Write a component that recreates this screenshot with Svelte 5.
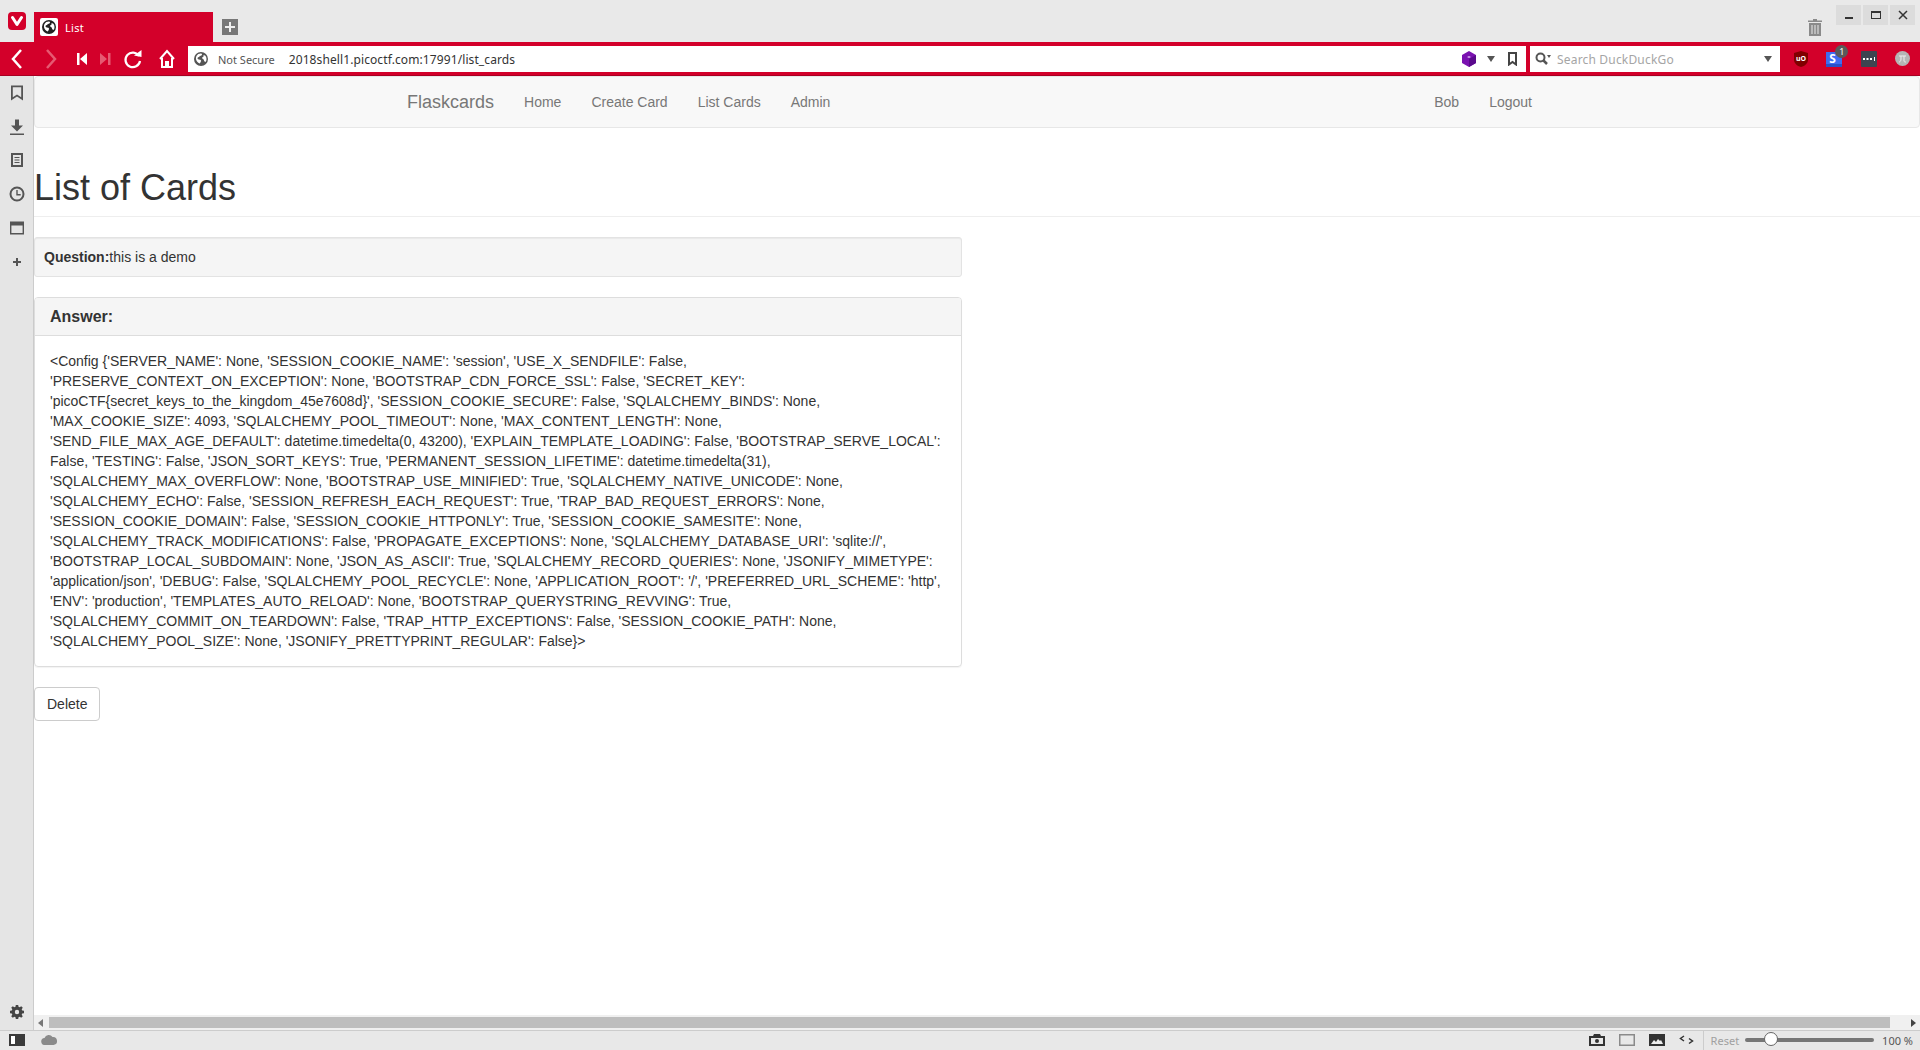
<script lang="ts">
  const sideIcons = [
    "M3 1.500h12v15l-6-4-6 4zM4.800 3.200v10l4.200-2.800 4.200 2.800v-10z",
    "M7 1.500h4v6h4l-6 6-6-6h4zM2 15.500h14v1.600H2z",
    "M3 2h12v14H3zM5 4v10h8V4zM6.500 6h5v1h-5zM6.500 8.500h5v1h-5zM6.500 11h5v1h-5z",
    "M9 1.500a7.500 7.500 0 1 0 0 15 7.500 7.500 0 0 0 0-15zM9 3.500a5.500 5.500 0 1 1 0 11 5.500 5.500 0 0 1 0-11zM8.300 5h1.400v4h3v1.400H8.300z",
    "M2 2.500h14v13H2zM3.400 6.500v7.600h11.200V6.500z",
    "M8 5h2v3h3v2h-3v3H8v-3H5V8h3z",
  ];

  const configText = `<Config {'SERVER_NAME': None, 'SESSION_COOKIE_NAME': 'session', 'USE_X_SENDFILE': False, 'PRESERVE_CONTEXT_ON_EXCEPTION': None, 'BOOTSTRAP_CDN_FORCE_SSL': False, 'SECRET_KEY': 'picoCTF{secret_keys_to_the_kingdom_45e7608d}', 'SESSION_COOKIE_SECURE': False, 'SQLALCHEMY_BINDS': None, 'MAX_COOKIE_SIZE': 4093, 'SQLALCHEMY_POOL_TIMEOUT': None, 'MAX_CONTENT_LENGTH': None, 'SEND_FILE_MAX_AGE_DEFAULT': datetime.timedelta(0, 43200), 'EXPLAIN_TEMPLATE_LOADING': False, 'BOOTSTRAP_SERVE_LOCAL': False, 'TESTING': False, 'JSON_SORT_KEYS': True, 'PERMANENT_SESSION_LIFETIME': datetime.timedelta(31), 'SQLALCHEMY_MAX_OVERFLOW': None, 'BOOTSTRAP_USE_MINIFIED': True, 'SQLALCHEMY_NATIVE_UNICODE': None, 'SQLALCHEMY_ECHO': False, 'SESSION_REFRESH_EACH_REQUEST': True, 'TRAP_BAD_REQUEST_ERRORS': None, 'SESSION_COOKIE_DOMAIN': False, 'SESSION_COOKIE_HTTPONLY': True, 'SESSION_COOKIE_SAMESITE': None, 'SQLALCHEMY_TRACK_MODIFICATIONS': False, 'PROPAGATE_EXCEPTIONS': None, 'SQLALCHEMY_DATABASE_URI': 'sqlite://', 'BOOTSTRAP_LOCAL_SUBDOMAIN': None, 'JSON_AS_ASCII': True, 'SQLALCHEMY_RECORD_QUERIES': None, 'JSONIFY_MIMETYPE': 'application/json', 'DEBUG': False, 'SQLALCHEMY_POOL_RECYCLE': None, 'APPLICATION_ROOT': '/', 'PREFERRED_URL_SCHEME': 'http', 'ENV': 'production', 'TEMPLATES_AUTO_RELOAD': None, 'BOOTSTRAP_QUERYSTRING_REVVING': True, 'SQLALCHEMY_COMMIT_ON_TEARDOWN': False, 'TRAP_HTTP_EXCEPTIONS': False, 'SESSION_COOKIE_PATH': None, 'SQLALCHEMY_POOL_SIZE': None, 'JSONIFY_PRETTYPRINT_REGULAR': False}>`;

  const globe = "M8 0a8 8 0 1 0 0 16A8 8 0 0 0 8 0zM5.200 2.200c1-.5 2.300-.7 3.300-.5l.8 1.300-1.300 1.200-1.600.3-.4 1.300-1.500.3-.6 1.300 1.400 1.300 2 .1.900 1.200-.6 1.500-.9 1.600c-2.600-.8-4.500-3.300-4.500-6.100 0-1.800 1.300-3.900 3-5.100zM11 3.500l2 .9c.8 1.100 1.300 2.200 1.300 3.600 0 1.300-.4 2.500-1.100 3.500l-1.500-.8-.6-2-1.500-1-.2-1.700 1.400-.6z";
</script>

<div class="window">
  <header class="tabstrip">
    <div class="logo">
      <svg width="18" height="18" viewBox="0 0 18 18"><rect width="18" height="18" rx="4" fill="#d3002a" /><path d="M4.500 5.500 9 12.500l4.500-7" fill="none" stroke="#fff" stroke-width="3" stroke-linecap="round" stroke-linejoin="round" /></svg>
    </div>
    <div class="tab">
      <span class="favicon">
        <svg width="14" height="14" viewBox="0 0 16 16"><path d={globe} fill="#222" fill-rule="evenodd" /></svg>
      </span>
      <span class="tab-title">List</span>
    </div>
    <div class="newtab">
      <svg width="16" height="16" viewBox="0 0 16 16"><rect width="16" height="16" fill="#777" /><path d="M7 3h2v4h4v2H9v4H7V9H3V7h4z" fill="#eee" /></svg>
    </div>
    <div class="grow"></div>
    <svg class="trash" width="14" height="17" viewBox="0 0 14 17"><path d="M5 0h4v1.500h5V3H0V1.500h5zM1 4h12v13H1zM3.500 6v9h1V6zM6.500 6v9h1V6zM9.500 6v9h1V6z" fill="#8a8a8a" fill-rule="evenodd" /></svg>
    <div class="winbtns">
      <span class="winbtn"><svg width="12" height="12" viewBox="0 0 12 12"><rect x="2" y="8" width="8" height="2" fill="#333" /></svg></span>
      <span class="winbtn"><svg width="12" height="12" viewBox="0 0 12 12"><path d="M1 2h10v8H1zM2 4v5h8V4z" fill="#333" fill-rule="evenodd" /></svg></span>
      <span class="winbtn"><svg width="12" height="12" viewBox="0 0 12 12"><path d="M2 2l8 8M10 2l-8 8" stroke="#333" stroke-width="1.500" /></svg></span>
    </div>
  </header>

  <nav class="toolbar">
    <div class="navbtns">
      <svg width="34" height="26" viewBox="0 0 34 26"><path d="M21 4l-8 9 8 9" fill="none" stroke="#fff" stroke-width="2.500" /></svg>
      <svg width="34" height="26" viewBox="0 0 34 26"><path d="M13 4l8 9-8 9" fill="none" stroke="#e65a72" stroke-width="2.500" /></svg>
      <svg class="skip" width="24" height="26" viewBox="0 0 24 26"><path d="M7 7h2.500v12H7zM17 7v12l-7-6z" fill="#fff" /></svg>
      <svg class="skip-next" width="24" height="26" viewBox="0 0 24 26"><path d="M6 7l7 6-7 6zM14 7h2.500v12H14z" fill="#e65a72" /></svg>
      <svg width="34" height="26" viewBox="0 0 34 26"><path d="M23 10a7.300 7.300 0 1 0 1 5" fill="none" stroke="#fff" stroke-width="2.200" /><path d="M18 9.500l7.500 1.500V4z" fill="#fff" /></svg>
      <svg width="34" height="26" viewBox="0 0 34 26"><path d="M10 13l7-8 7 8M12 12v9h4v-5h2v5h4v-9" fill="none" stroke="#fff" stroke-width="2" /></svg>
    </div>

    <div class="addressbar">
      <svg width="14" height="14" viewBox="0 0 16 16"><path d={globe} fill="#555" fill-rule="evenodd" /></svg>
      <span class="notsecure">Not Secure</span>
      <span class="url">2018shell1.picoctf.com:17991/list_cards</span>
      <div class="grow"></div>
      <svg width="16" height="16" viewBox="0 0 16 16"><path d="M8 0l7 4v8l-7 4-7-4V4z" fill="#7a12b0" /><path d="M8 8l7-4v8l-7 4z" fill="#5a0a8c" /><path d="M6 6l2-1 2 1-2 1z" fill="#d9b3f0" /></svg>
      <svg class="caret" width="8" height="6" viewBox="0 0 8 6"><path d="M0 0h8L4 6z" fill="#555" /></svg>
      <svg class="mark" width="9" height="14" viewBox="0 0 9 14"><path d="M1 1h7v11.500L4.500 10 1 12.500z" fill="none" stroke="#444" stroke-width="2" /></svg>
    </div>

    <div class="searchbar">
      <svg width="16" height="14" viewBox="0 0 16 14"><circle cx="5.500" cy="5.500" r="4" fill="none" stroke="#555" stroke-width="2" /><path d="M8.500 8.500 12 12" stroke="#555" stroke-width="2.500" /><path d="M12 3h4l-2 3z" fill="#555" /></svg>
      <span class="search-placeholder">Search DuckDuckGo</span>
      <div class="grow"></div>
      <svg width="8" height="6" viewBox="0 0 8 6"><path d="M0 0h8L4 6z" fill="#555" /></svg>
    </div>

    <div class="extensions">
      <svg width="14" height="16" viewBox="0 0 14 16"><path d="M7 0l7 2v7c0 3-3 6-7 7-4-1-7-4-7-7V2z" fill="#800000" /><text x="7" y="9.500" class="ublock">uO</text></svg>
      <span class="ext-s">
        <svg width="16" height="16" viewBox="0 0 16 16"><rect width="16" height="15" y="1" fill="#2a50c8" /><rect width="16" height="12" y="1" fill="#3f6cf0" /></svg>
        <span class="ext-s-letter">S</span>
        <span class="badge">1</span>
      </span>
      <svg width="16" height="16" viewBox="0 0 16 16"><rect width="16" height="16" rx="1" fill="#3d4450" /><path d="M2 7h2v2H2zM5.500 7h2v2h-2zM9 7h2v2H9zM13 6h1v4h-1z" fill="#fff" /></svg>
      <svg width="15" height="15" viewBox="0 0 15 15"><circle cx="7.500" cy="7.500" r="7.500" fill="#b5b5b5" /><path d="M4 5h7M6 5v3c0 2-1 3-2 3M9 5v5c0 1 1 1 2 1" stroke="#eee" stroke-width="1" fill="none" /></svg>
    </div>
  </nav>

  <div class="middle">
    <aside class="sidebar">
      {#each sideIcons as d}
        <span class="side-item">
          <svg width="18" height="18" viewBox="0 0 18 18"><path {d} fill="#555" fill-rule="evenodd" /></svg>
        </span>
      {/each}
      <div class="grow"></div>
      <span class="gear">
        <svg width="14" height="14" viewBox="0 0 14 14"><path d="M5.800 0h2.400l.3 1.800 1.200.5L11.200 1.200l1.600 1.600-1.100 1.500.5 1.200L14 5.800v2.400l-1.800.3-.5 1.200 1.100 1.500-1.600 1.600-1.500-1.100-1.200.5L8.200 14H5.800l-.3-1.800-1.200-.5-1.500 1.100-1.600-1.600 1.100-1.500-.5-1.200L0 8.200V5.800l1.800-.3.500-1.200L1.200 2.800l1.600-1.600 1.500 1.100 1.200-.5zM7 4.800a2.200 2.200 0 1 0 0 4.400 2.200 2.200 0 0 0 0-4.400z" fill="#444" fill-rule="evenodd" /></svg>
      </span>
    </aside>

    <div class="viewport">
      <main class="page">
        <div class="site-nav">
          <div class="site-nav-inner">
            <a class="brand" href="#top">Flaskcards</a>
            <a href="#top">Home</a>
            <a href="#top">Create Card</a>
            <a href="#top">List Cards</a>
            <a href="#top">Admin</a>
            <div class="grow"></div>
            <a href="#top">Bob</a>
            <a href="#top">Logout</a>
          </div>
        </div>

        <div class="page-header"><h1>List of Cards</h1></div>

        <div class="well"><strong>Question:</strong>this is a demo</div>

        <section class="panel">
          <div class="panel-heading">Answer:</div>
          <div class="panel-body">{configText}</div>
        </section>

        <button class="btn">Delete</button>
      </main>

      <div class="hscroll">
        <svg width="5" height="8" viewBox="0 0 5 8"><path d="M5 0v8L0 4z" fill="#777" /></svg>
        <div class="hscroll-thumb"></div>
        <svg width="5" height="8" viewBox="0 0 5 8"><path d="M0 0v8l5-4z" fill="#444" /></svg>
      </div>
    </div>
  </div>

  <footer class="statusbar">
    <svg width="16" height="12" viewBox="0 0 16 12"><rect width="16" height="12" fill="#3a3a3a" /><rect x="2" y="2" width="4" height="8" fill="#fff" /></svg>
    <svg class="cloud" width="16" height="11" viewBox="0 0 16 11"><path d="M4 11a3.500 3.500 0 0 1-.5-7A4.500 4.500 0 0 1 11.500 3 4 4 0 0 1 12.500 11z" fill="#8a8a8a" /></svg>
    <div class="grow"></div>
    <div class="status-tools">
      <svg width="16" height="12" viewBox="0 0 16 12"><path d="M0 2h4l1-2h6l1 2h4v10H0zM2 4v6h12V4z" fill="#333" fill-rule="evenodd" /><circle cx="8" cy="7" r="2" fill="#333" /></svg>
      <svg width="16" height="12" viewBox="0 0 16 12"><rect x=".75" y=".75" width="14.500" height="10.500" fill="none" stroke="#8a8a8a" stroke-width="1.500" /></svg>
      <svg width="16" height="12" viewBox="0 0 16 12"><rect width="16" height="12" fill="#333" /><path d="M2 10l3-4 2 2 2-3 2 2 1-1 2 4z" fill="#eee" /></svg>
      <svg width="15" height="10" viewBox="0 0 15 10"><path d="M5 1 1.500 3.500 5 6M10 3.500l3.500 2.500L10 8.500" fill="none" stroke="#333" stroke-width="1.500" /></svg>
    </div>
    <div class="divider"></div>
    <span class="reset">Reset</span>
    <div class="slider"><span class="thumb"></span></div>
    <span class="zoom">100 %</span>
  </footer>
</div>

<style>
  :global(body) {
    margin: 0;
    overflow: hidden;
  }

  .window {
    width: 1920px;
    height: 1050px;
    display: flex;
    flex-direction: column;
    font-family: "Noto Sans", sans-serif;
    background: #fff;
  }

  .grow {
    flex: 1;
  }

  .tabstrip {
    height: 42px;
    flex: none;
    display: flex;
    align-items: flex-start;
    background: #e9e9e9;
  }

  .logo {
    width: 34px;
    padding: 12px 0 0 8px;
    box-sizing: border-box;
    display: flex;
  }

  .tab {
    width: 179px;
    height: 30px;
    margin-top: 12px;
    box-sizing: border-box;
    padding: 6px 0 0 6px;
    display: flex;
    gap: 7px;
    background: #d3002a;
    color: #fff;
    font-size: 11px;
    line-height: 18px;
  }

  .tab-title {
    margin-top: 1px;
    letter-spacing: 0.3px;
  }

  .favicon {
    width: 18px;
    height: 18px;
    border-radius: 2px;
    background: #fff;
    display: flex;
    align-items: center;
    justify-content: center;
  }

  .newtab {
    margin: 19px 0 0 9px;
    display: flex;
  }

  .trash {
    margin: 19px 14px 0 0;
  }

  .winbtns {
    display: flex;
    gap: 2px;
    margin: 5px 5px 0 0;
  }

  .winbtn {
    width: 25px;
    height: 20px;
    display: flex;
    align-items: center;
    justify-content: center;
    background: #dcdcdc;
  }

  .toolbar {
    height: 34px;
    flex: none;
    box-sizing: border-box;
    display: flex;
    align-items: center;
    background: #d3002a;
    border-bottom: 1px solid #a80022;
  }

  .navbtns {
    width: 188px;
    flex: none;
    display: flex;
    align-items: center;
  }

  .skip {
    margin-left: 2px;
  }

  .skip-next {
    margin-right: -2px;
  }

  .addressbar,
  .searchbar {
    height: 26px;
    display: flex;
    align-items: center;
    background: #fff;
    box-sizing: border-box;
  }

  .addressbar {
    width: 1338px;
    padding: 0 9px 0 6px;
    font-size: 11px;
  }

  .notsecure {
    margin: 1px 0 0 10px;
    color: #555;
  }

  .url {
    margin: 1px 0 0 14px;
    font-size: 12px;
    letter-spacing: 0.1px;
    color: #333;
  }

  .caret {
    margin: 0 13px 0 10px;
  }

  .searchbar {
    width: 250px;
    margin-left: 4px;
    padding: 0 8px 0 5px;
  }

  .search-placeholder {
    margin: 1px 0 0 6px;
    font-size: 12px;
    letter-spacing: 0.18px;
    color: #a5a5a5;
  }

  .extensions {
    width: 140px;
    flex: none;
    box-sizing: border-box;
    padding: 0 10px 0 14px;
    display: flex;
    align-items: center;
    justify-content: space-between;
  }

  .ublock {
    font-size: 7px;
    font-weight: 700;
    fill: #fff;
    text-anchor: middle;
  }

  .ext-s {
    position: relative;
    display: flex;
  }

  .ext-s-letter {
    position: absolute;
    left: 3px;
    top: 0;
    color: #fff;
    font-size: 12px;
    font-weight: 700;
    line-height: 15px;
  }

  .badge {
    position: absolute;
    left: 9px;
    top: -6px;
    width: 13px;
    height: 13px;
    border-radius: 50%;
    background: #5a5a5a;
    color: #fff;
    font-size: 9px;
    line-height: 13px;
    text-align: center;
  }

  .middle {
    flex: 1;
    min-height: 0;
    display: flex;
  }

  .sidebar {
    width: 34px;
    flex: none;
    box-sizing: border-box;
    display: flex;
    flex-direction: column;
    align-items: center;
    background: #e5e5e5;
    border-right: 1px solid #ccc;
  }

  .side-item {
    height: 33.8px;
    flex: none;
    display: flex;
    align-items: center;
  }

  .gear {
    display: flex;
    padding-bottom: 11px;
  }

  .viewport {
    flex: 1;
    min-width: 0;
    display: flex;
    flex-direction: column;
  }

  .page {
    flex: 1;
    min-height: 0;
    font-family: "Liberation Sans", Arial, sans-serif;
    font-size: 14px;
    line-height: 20px;
    color: #333;
  }

  .site-nav {
    height: 52px;
    box-sizing: border-box;
    background: #f8f8f8;
    border: 1px solid #e7e7e7;
    border-radius: 4px;
  }

  .site-nav-inner {
    width: 1170px;
    height: 50px;
    margin: 0 auto;
    box-sizing: border-box;
    padding: 0 30px 0 15px;
    display: flex;
    align-items: center;
    gap: 30px;
  }

  .site-nav-inner a {
    color: #777;
    text-decoration: none;
  }

  .site-nav-inner .brand {
    font-size: 18px;
  }

  .page-header {
    height: 69px;
    box-sizing: border-box;
    margin-top: 20px;
    margin-bottom: 20px;
    border-bottom: 1px solid #eee;
    display: flex;
    align-items: flex-end;
    padding-bottom: 8px;
  }

  h1 {
    margin: 0;
    font-size: 36px;
    font-weight: 500;
    line-height: 40px;
    color: #333;
  }

  .well {
    width: 928px;
    height: 40px;
    box-sizing: border-box;
    padding: 9px;
    margin-bottom: 20px;
    background: #f5f5f5;
    border: 1px solid #e3e3e3;
    border-radius: 3px;
    box-shadow: inset 0 1px 1px rgba(0, 0, 0, 0.05);
  }

  .panel {
    width: 928px;
    box-sizing: border-box;
    margin-bottom: 20px;
    border: 1px solid #ddd;
    border-radius: 4px;
    box-shadow: 0 1px 1px rgba(0, 0, 0, 0.05);
  }

  .panel-heading {
    padding: 10px 15px;
    font-size: 16px;
    font-weight: 700;
    line-height: 17px;
    background: #f5f5f5;
    border-bottom: 1px solid #ddd;
    border-radius: 3px 3px 0 0;
  }

  .panel-body {
    padding: 15px;
    overflow-wrap: break-word;
  }

  .btn {
    display: block;
    padding: 6px 12px;
    font: inherit;
    color: #333;
    background: #fff;
    border: 1px solid #ccc;
    border-radius: 4px;
  }

  .hscroll {
    height: 15px;
    flex: none;
    display: flex;
    align-items: center;
    gap: 6px;
    padding: 0 4px 0 4px;
    background: #f0f0f0;
  }

  .hscroll-thumb {
    width: 1841px;
    height: 11px;
    flex: none;
    background: #bebebe;
    margin-right: 15px;
  }

  .statusbar {
    height: 20px;
    flex: none;
    box-sizing: border-box;
    display: flex;
    align-items: center;
    padding: 0 7px 1px 9px;
    background: #e8e8e8;
    border-top: 1px solid #ccc;
    font-size: 11px;
  }

  .cloud {
    margin: 0 0 1px 16px;
  }

  .status-tools {
    display: flex;
    align-items: center;
    gap: 14px;
    margin-right: 2px;
  }

  .divider {
    width: 1px;
    height: 19px;
    margin: 0 7px;
    background: #ccc;
  }

  .reset {
    color: #a0a0a0;
  }

  .slider {
    position: relative;
    width: 129px;
    height: 4px;
    margin: 0 8px 0 6px;
    border-radius: 2px;
    background: #777;
  }

  .thumb {
    position: absolute;
    left: 19px;
    top: -6px;
    width: 14px;
    height: 14px;
    box-sizing: border-box;
    border-radius: 50%;
    background: #fff;
    border: 1px solid #666;
  }

  .zoom {
    color: #555;
  }
</style>
